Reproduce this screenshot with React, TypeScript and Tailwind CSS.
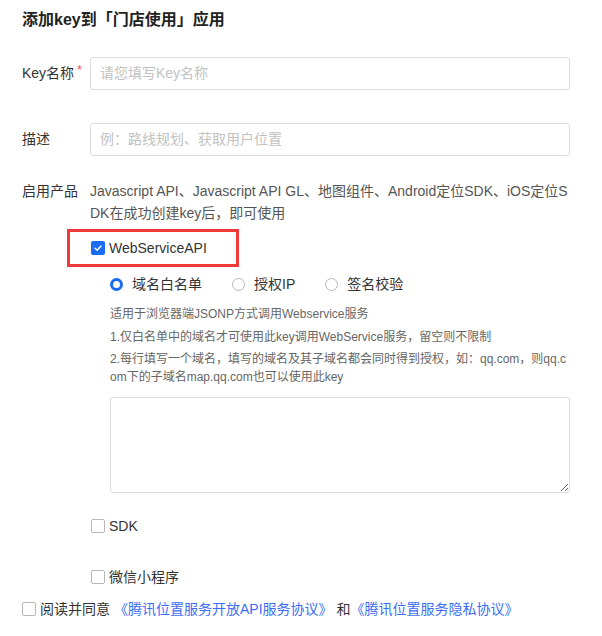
import React from "react";

const font = { fontFamily: '"Liberation Sans", Arial, "Noto Sans CJK SC", sans-serif' };

function Box({ checked }: { checked?: boolean }) {
  if (checked) {
    return (
      <span className="flex h-[14px] w-[14px] shrink-0 items-center justify-center rounded-[2px] bg-[#1b6cf2]">
        <svg width="10" height="10" viewBox="0 0 10 10" fill="none">
          <path d="M2 5.2 L4.2 7.2 L8 3" stroke="white" strokeWidth="1.4" strokeLinecap="round" strokeLinejoin="round" />
        </svg>
      </span>
    );
  }
  return <span className="block h-[14px] w-[14px] shrink-0 rounded-[2px] border border-[#b8b8b8] bg-white" />;
}

function Radio({ checked, label }: { checked?: boolean; label: string }) {
  return (
    <div className="mr-[30px] flex items-center">
      {checked ? (
        <span className="block h-[13px] w-[13px] rounded-full border-[3.5px] border-[#1b6cf2] bg-white" />
      ) : (
        <span className="block h-[13px] w-[13px] rounded-full border border-[#b8b8b8] bg-white" />
      )}
      <span className="ml-[9px] text-[14px] leading-5 text-[#333]">{label}</span>
    </div>
  );
}

export default function App() {
  return (
    <div className="min-h-[636px] w-[602px] bg-white pl-[22px] pt-2" style={font}>
      <div className="h-6 text-[16px] font-bold leading-6 text-[#222]">添加key到「门店使用」应用</div>

      <div className="mt-[25px] flex items-center">
        <div className="w-[68px] text-[14px] text-[#333]">
          Key名称<span className="relative top-[-4px] ml-[3px] text-[12px] text-[#f5484e]">*</span>
        </div>
        <div className="flex h-[33px] w-[480px] items-center rounded-[3px] border border-[#dcdcdc] px-[9px] text-[14px] text-[#c2c2c2]">
          请您填写Key名称
        </div>
      </div>

      <div className="mt-[33px] flex items-center">
        <div className="w-[68px] text-[14px] text-[#333]">描述</div>
        <div className="flex h-[33px] w-[480px] items-center rounded-[3px] border border-[#dcdcdc] px-[9px] text-[14px] text-[#c2c2c2]">
          例：路线规划、获取用户位置
        </div>
      </div>

      <div className="mt-[24px] flex items-start">
        <div className="w-[68px] text-[14px] leading-[22px] text-[#333]">启用产品</div>
        <div className="w-[480px] break-all text-[14px] leading-[22px] text-[#555]">
          Javascript API、Javascript API GL、地图组件、Android定位SDK、iOS定位SDK在成功创建key后，即可使用
        </div>
      </div>

      <div className="ml-[45px] mt-[5px] flex h-[38px] w-[172px] items-center border-[3px] border-[#f03a3a] pl-[21px]">
        <Box checked />
        <span className="ml-[4px] text-[14px] text-[#333]">WebServiceAPI</span>
      </div>

      <div className="ml-[88px] mt-[7px] flex h-5 items-center">
        <Radio checked label="域名白名单" />
        <Radio label="授权IP" />
        <Radio label="签名校验" />
      </div>

      <div className="ml-[88px] mt-[11px] w-[460px] break-all text-[12px] leading-[18px] text-[#666]">
        <p>适用于浏览器端JSONP方式调用Webservice服务</p>
        <p className="mt-[5px]">1.仅白名单中的域名才可使用此key调用WebService服务，留空则不限制</p>
        <p className="mt-[4px]">2.每行填写一个域名，填写的域名及其子域名都会同时得到授权，如：qq.com，则qq.com下的子域名map.qq.com也可以使用此key</p>
      </div>

      <textarea className="ml-[88px] mt-[11px] block h-[96px] w-[460px] rounded-[3px] border border-[#dcdcdc] bg-white outline-none" />

      <div className="ml-[69px] mt-[23px] flex h-5 items-center">
        <Box />
        <span className="ml-[4px] text-[14px] text-[#333]">SDK</span>
      </div>

      <div className="ml-[69px] mt-[31px] flex h-5 items-center">
        <Box />
        <span className="ml-[4px] text-[14px] text-[#333]">微信小程序</span>
      </div>

      <div className="mt-[12px] flex h-5 items-center text-[14px]">
        <Box />
        <span className="ml-[4px] text-[#333]">阅读并同意</span>
        <span className="ml-[4px] text-[#3b6ef5]">《腾讯位置服务开放API服务协议》</span>
        <span className="ml-[4px] text-[#333]">和</span>
        <span className="text-[#3b6ef5]">《腾讯位置服务隐私协议》</span>
      </div>
    </div>
  );
}
